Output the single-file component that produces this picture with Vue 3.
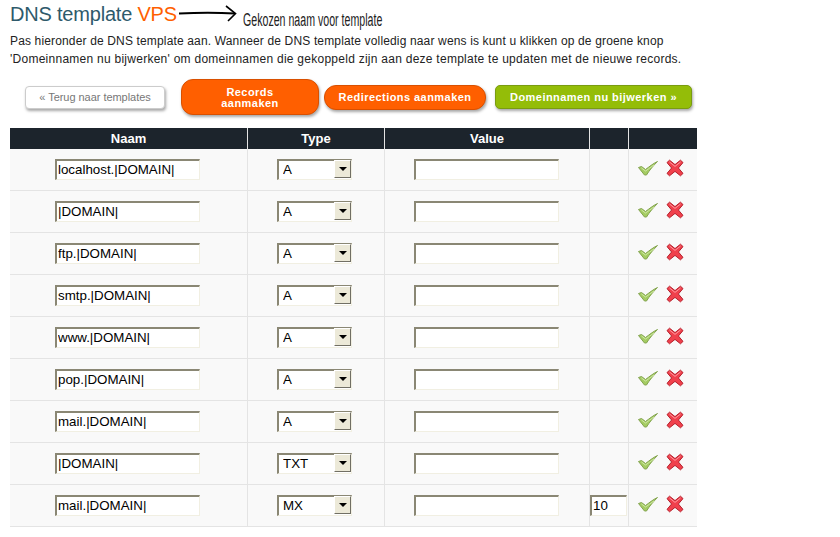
<template>
  <div class="page">
    <div class="heading">
      <h1 class="title">DNS template <span class="vps">VPS</span></h1>
      <svg class="arrow" width="58" height="18" viewBox="0 0 58 18">
        <path d="M0 8.5 C20 7.5 38 7.5 56 8.5" fill="none" stroke="#000" stroke-width="2" />
        <path d="M47 1 L56.5 8.5 L49 16" fill="none" stroke="#000" stroke-width="1.6" />
      </svg>
      <span class="note">Gekozen naam voor template</span>
    </div>
    <p class="intro">
      <span class="line-one">Pas hieronder de DNS template aan. Wanneer de DNS template volledig naar wens is kunt u klikken op de groene knop</span>
      <span class="line-two">'Domeinnamen nu bijwerken' om domeinnamen die gekoppeld zijn aan deze template te updaten met de nieuwe records.</span>
    </p>

    <div class="buttons">
      <a class="btn btn-back">« Terug naar templates</a>
      <a class="btn btn-orange btn-records">Records<br />aanmaken</a>
      <a class="btn btn-orange btn-redirects">Redirections aanmaken</a>
      <a class="btn btn-green">Domeinnamen nu bijwerken »</a>
    </div>

    <table class="records">
      <thead>
        <tr>
          <th class="col-name">Naam</th>
          <th class="col-type">Type</th>
          <th class="col-value">Value</th>
          <th class="col-prio"></th>
          <th class="col-actions"></th>
        </tr>
      </thead>
      <tbody>
        <tr v-for="(record, i) in records" :key="i">
          <td><input class="field field-name" :value="record.name" /></td>
          <td>
            <div class="select-wrap">
              <select class="field field-type" :value="record.type">
                <option v-for="t in types" :key="t">{{ t }}</option>
              </select>
              <span class="select-btn"><span class="select-caret"></span></span>
            </div>
          </td>
          <td><input class="field field-value" value="" /></td>
          <td class="prio-cell">
            <input v-if="record.prio" class="field field-prio" :value="record.prio" />
          </td>
          <td class="actions">
            <svg class="icon" width="20" height="16" viewBox="0 0 20 16">
              <path d="M0.5 7.5 L3.5 6.5 L7.5 9.5 C11 7 15 3.5 19.5 1.5 C15.5 5.5 11.5 10 8.5 15 L6.5 15 Z" fill="#a4cc62" stroke="#84a450" stroke-width="1" stroke-linejoin="round" />
              <path d="M3.5 8 L7.5 11 C10.5 9 13 7 16 5" fill="none" stroke="#cfe8a4" stroke-width="1" />
            </svg>
            <svg class="icon" width="18" height="18" viewBox="0 0 18 18">
              <path d="M3.5 1.2 L9 5.6 L14.5 1.2 L17 3.6 L12.4 9 L17 14.4 L14.5 16.8 L9 12.4 L3.5 16.8 L1 14.4 L5.6 9 L1 3.6 Z" fill="#f0404c" stroke="#b5202c" stroke-width="1" stroke-linejoin="round" />
              <path d="M3.5 3 L9 7.4 L14.5 3" fill="none" stroke="#ff9aa0" stroke-width="1" />
            </svg>
          </td>
        </tr>
      </tbody>
    </table>
  </div>
</template>

<script setup>
const types = ['A', 'TXT', 'MX']

const records = [
  { name: 'localhost.|DOMAIN|', type: 'A' },
  { name: '|DOMAIN|', type: 'A' },
  { name: 'ftp.|DOMAIN|', type: 'A' },
  { name: 'smtp.|DOMAIN|', type: 'A' },
  { name: 'www.|DOMAIN|', type: 'A' },
  { name: 'pop.|DOMAIN|', type: 'A' },
  { name: 'mail.|DOMAIN|', type: 'A' },
  { name: '|DOMAIN|', type: 'TXT' },
  { name: 'mail.|DOMAIN|', type: 'MX', prio: '10' },
]
</script>

<style scoped>
.page {
  width: 840px;
  height: 537px;
  overflow: hidden;
  box-sizing: border-box;
  padding: 4px 0 0 10px;
  font-family: "Liberation Sans", Arial, sans-serif;
  color: #222;
  background: #fff;
}

.heading {
  display: flex;
  align-items: flex-start;
  height: 28px;
}

.title {
  margin: 0;
  font-size: 20px;
  line-height: 21px;
  font-weight: normal;
  letter-spacing: -0.2px;
  color: #2e5a6b;
  white-space: nowrap;
}

.vps {
  color: #ff5f00;
}

.arrow {
  margin: 1px 0 0 2px;
  flex: none;
}

.note {
  width: 140px;
  margin: 7px 0 0 6px;
  font-size: 18px;
  line-height: 18px;
  color: #222;
  white-space: nowrap;
  transform: scaleX(0.59);
  transform-origin: left center;
}

.intro {
  margin: 0;
  font-size: 12px;
  line-height: 18px;
  color: #222;
  white-space: nowrap;
}

.line-one,
.line-two {
  display: block;
}

.line-one {
  letter-spacing: 0.15px;
}

.line-two {
  letter-spacing: 0.26px;
}

.buttons {
  display: flex;
  align-items: center;
  height: 36px;
  margin-top: 11px;
  padding-left: 15px;
}

.btn {
  box-sizing: border-box;
  display: block;
  text-align: center;
  font-size: 11px;
  font-weight: bold;
  letter-spacing: 0.45px;
  color: #fff;
  box-shadow: 1px 2px 3px rgba(0, 0, 0, 0.35);
}

.btn-back {
  width: 140px;
  height: 23px;
  line-height: 21px;
  border: 1px solid #ccc;
  border-radius: 4px;
  background: #fff;
  color: #777;
  font-weight: normal;
  letter-spacing: -0.04px;
}

.btn-orange {
  background: #ff5f00;
  border: 1px solid #d95000;
}

.btn-records {
  width: 138px;
  height: 36px;
  margin-left: 16px;
  padding-top: 7px;
  line-height: 11px;
  border-radius: 12px;
}

.btn-redirects {
  width: 162px;
  height: 25px;
  line-height: 23px;
  margin-left: 5px;
  border-radius: 12px;
}

.btn-green {
  width: 197px;
  height: 24px;
  line-height: 22px;
  margin-left: 9px;
  background: #94bd08;
  border: 1px solid #7a9c10;
  border-radius: 5px;
}

.records {
  width: 687px;
  margin-top: 13px;
  border-collapse: collapse;
  table-layout: fixed;
}

th {
  height: 21px;
  padding: 0;
  background: #1c242c;
  color: #fff;
  font-size: 13px;
  font-weight: bold;
  border-left: 1px solid #e4e4e4;
}

th:first-child {
  border-left: none;
}

.col-name { width: 237px; }
.col-type { width: 136px; }
.col-value { width: 204px; }
.col-prio { width: 38px; }

td {
  height: 41px;
  padding: 0;
  background: #f9f9f9;
  border-left: 1px solid #e4e4e4;
  border-bottom: 1px solid #e4e4e4;
}

td:first-child {
  border-left: none;
}

.field {
  box-sizing: border-box;
  display: block;
  height: 21px;
  margin-top: -1px;
  padding: 0 1px;
  font-family: "Liberation Sans", Arial, sans-serif;
  font-size: 13.33px;
  color: #000;
  background: #fff;
  border-style: solid;
  border-width: 2px 1px 1px 2px;
  border-color: #8a8774 #f1efe2 #f1efe2 #8a8774;
  border-radius: 0;
  outline: none;
}

.field-name {
  width: 145px;
  margin-left: 45px;
}

.field-value {
  width: 145px;
  margin-left: 29px;
}

.field-prio {
  width: 37px;
  margin-left: 0;
}

.select-wrap {
  position: relative;
  width: 75px;
  height: 21px;
  margin-left: 29px;
}

.field-type {
  width: 75px;
  padding: 0 0 0 4px;
  appearance: none;
}

.select-btn {
  position: absolute;
  top: 1px;
  right: 1px;
  width: 17px;
  height: 18px;
  display: flex;
  align-items: center;
  justify-content: center;
  background: #ece9d8;
  border: 1px solid;
  border-color: #fff #716f64 #716f64 #fff;
  box-sizing: border-box;
  pointer-events: none;
}

.select-caret {
  width: 0;
  height: 0;
  border-left: 4px solid transparent;
  border-right: 4px solid transparent;
  border-top: 4px solid #000;
}

.actions {
  padding-left: 9px;
}

.actions .icon {
  vertical-align: middle;
  margin-bottom: 3px;
}

.actions .icon + .icon {
  margin-left: 8px;
}
</style>
